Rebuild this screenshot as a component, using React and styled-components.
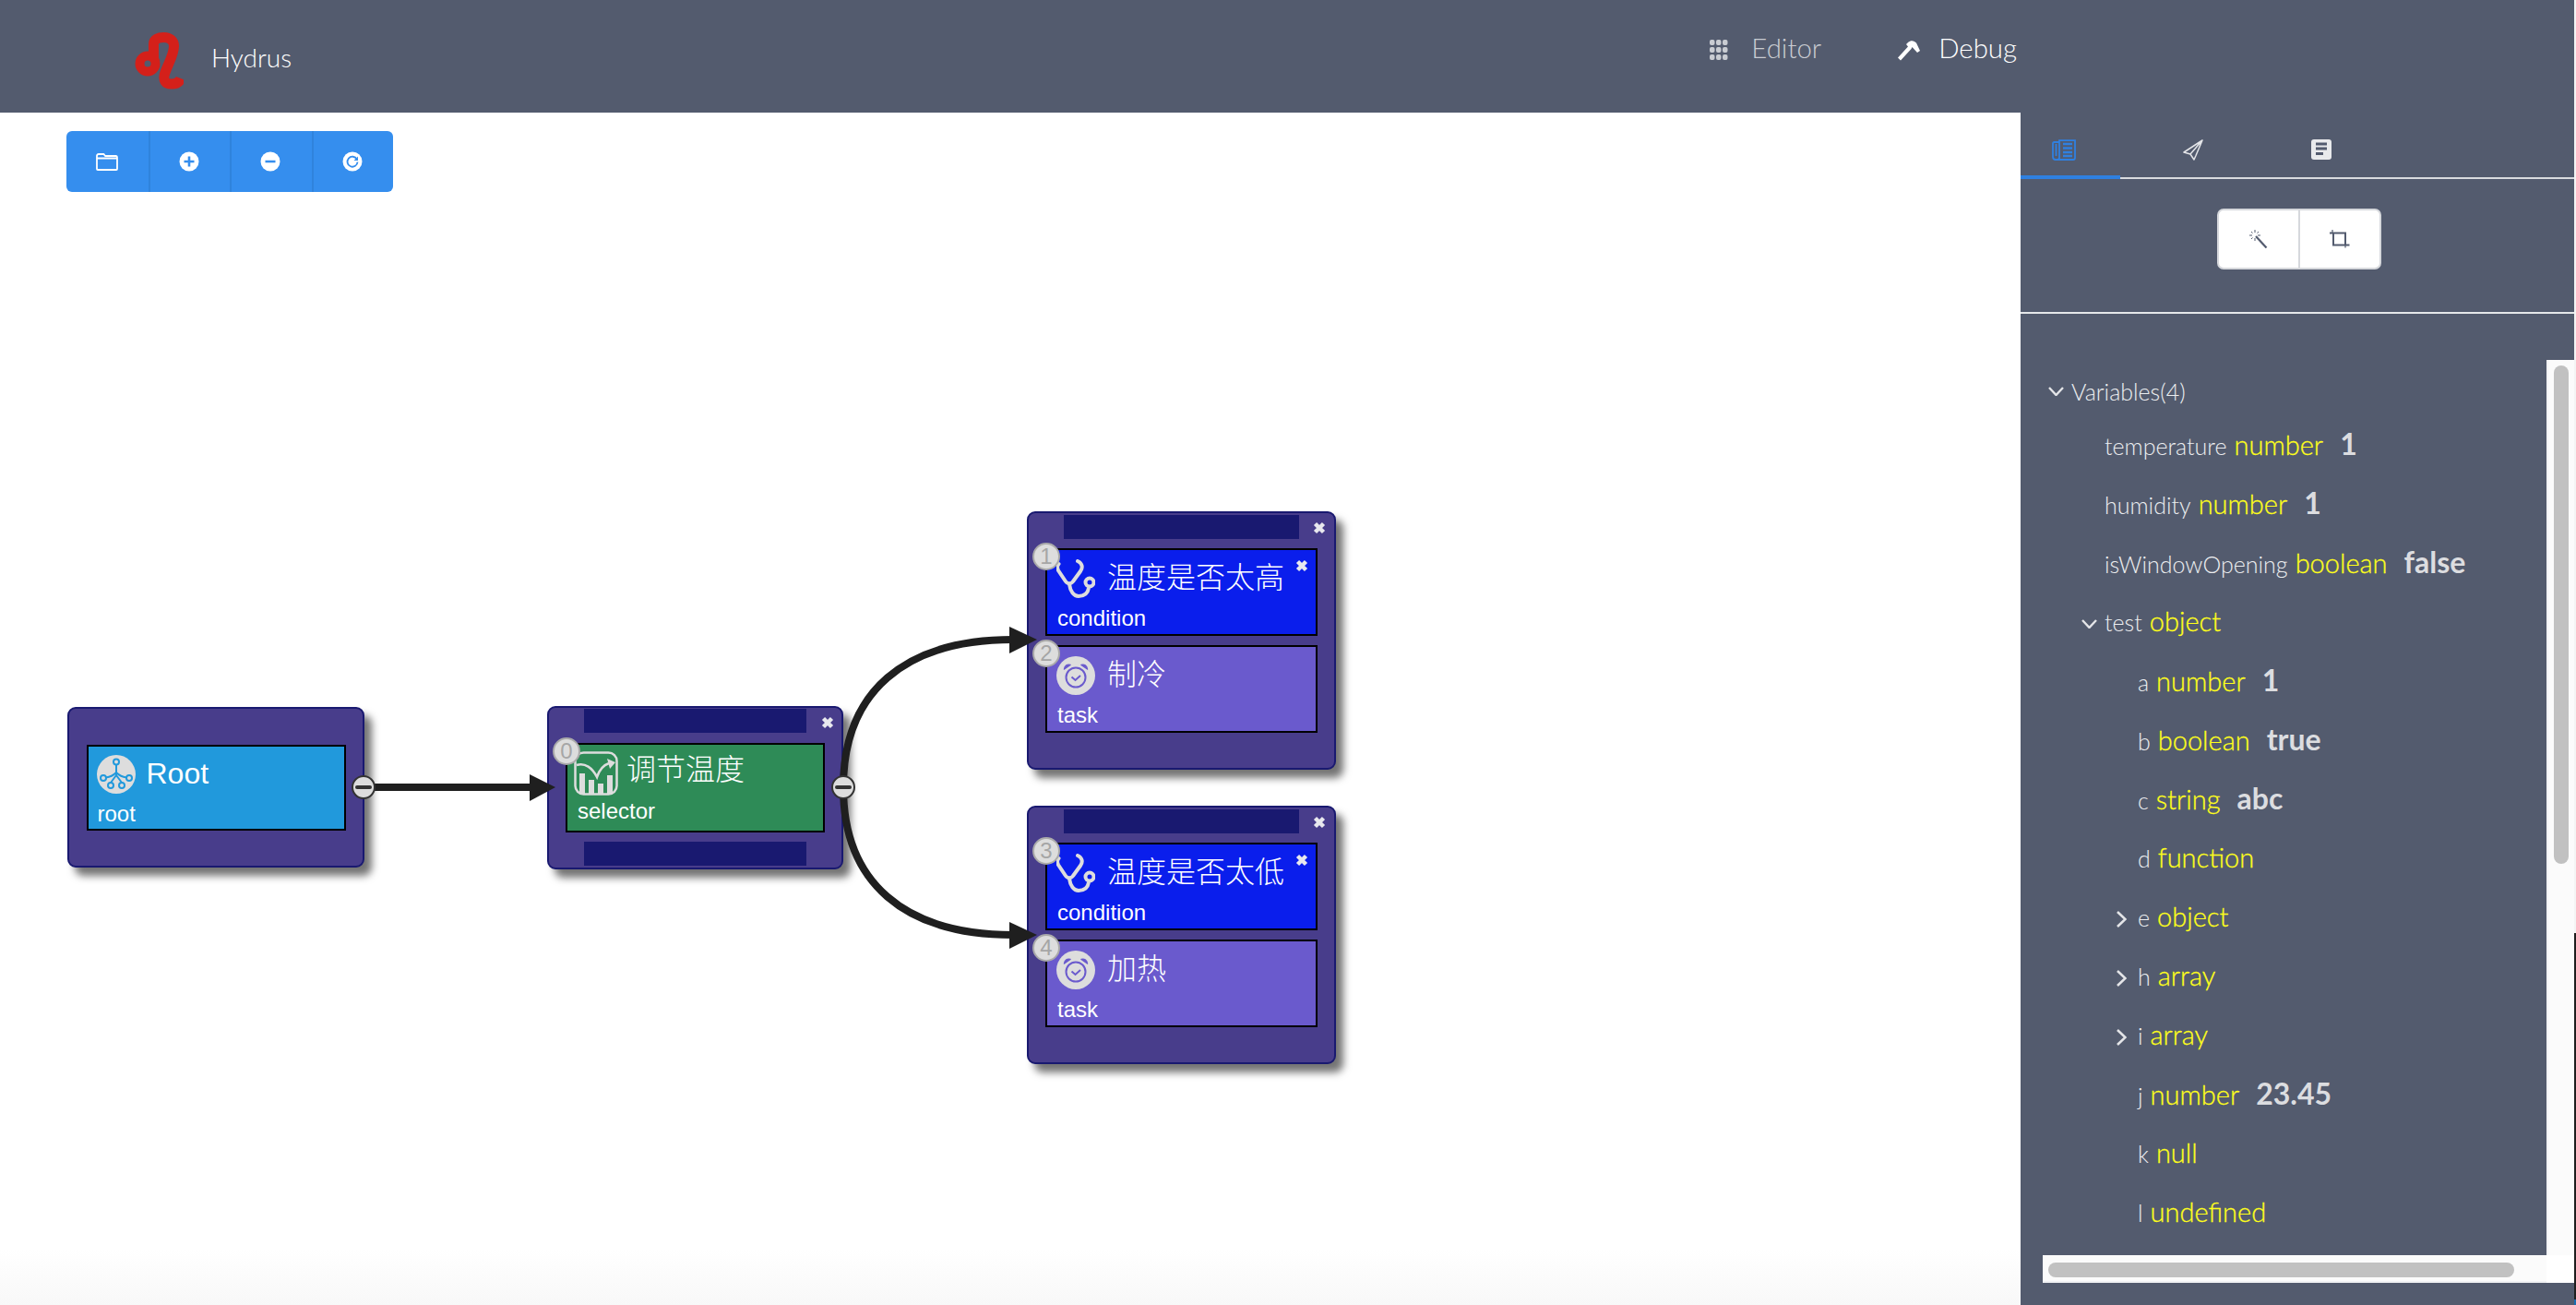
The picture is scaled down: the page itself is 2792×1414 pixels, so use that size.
import React from "react";
import styled, { createGlobalStyle } from "styled-components";

const Global = createGlobalStyle`
  html, body { margin: 0; padding: 0; background: #fff; }
  body { font-family: Lato, "Noto Sans", sans-serif; overflow: hidden; }
  #root { width: 2792px; height: 1414px; }
  * { box-sizing: border-box; }
`;

const Page = styled.div`
  width: 2792px; height: 1414px; display: flex; flex-direction: column; overflow: hidden;
  border-right: 2px solid #222;
  border-image: linear-gradient(#f4f4f4 1010px, #1e1e1e 1010px, #1e1e1e 1406px, #1a6cb0 1406px) 2;
`;
const Header = styled.header`
  height: 122px; flex: none; background: #535b6e; display: flex; align-items: flex-start; padding-right: 604px;
`;
const Brand = styled.div`
  display: flex; align-items: flex-start; padding: 33px 0 0 145px; gap: 30px;
`;
const BrandName = styled.span`
  font-size: 28px; font-weight: 300; color: #fff; line-height: 34px; margin-top: 12px;
`;
const Nav = styled.nav`
  margin-left: auto; display: flex; gap: 82px; padding-top: 34px;
`;
const NavItem = styled.div`
  display: flex; align-items: center; gap: ${p => p.$gap}px; font-size: 29.400px; font-weight: 300; line-height: 36px;
  color: ${p => (p.$active ? "#fff" : "#c9ccd2")};
  & > svg { margin-top: 4px; }
`;
const Body = styled.div`
  flex: 1; display: flex; min-height: 0;
`;
const Canvas = styled.main`
  flex: 1; position: relative; overflow: hidden;
  background: linear-gradient(#fff calc(100% - 60px), #f8f8f8 100%);
`;
const Toolbar = styled.div`
  position: absolute; left: 72px; top: 20px; width: 354px; height: 66px; border-radius: 6px; background: #358eee; display: flex; overflow: hidden;
`;
const ToolButton = styled.div`
  flex: 0 0 88.500px; display: flex; align-items: center; justify-content: center;
  & + & { border-left: 2px solid #2f83dc; padding-right: 2px; }
`;
const Edges = styled.svg`
  position: absolute; left: 0; top: -122px; width: 2190px; height: 1414px; pointer-events: none;
`;
const Frame = styled.section`
  position: absolute; left: ${p => p.$x}px; top: ${p => p.$y - 122}px; width: ${p => p.$w}px; height: ${p => p.$h}px;
  background: #483d8b; border: 2px solid #191970; border-radius: 9px;
  box-shadow: 8px 9px 8px rgba(0,0,0,.55);
  display: flex; flex-direction: column; align-items: center; justify-content: ${p => p.$justify};
  gap: ${p => p.$gap}px; padding: ${p => p.$pad};
`;
const Bar = styled.div`
  width: ${p => p.$w}px; height: 26px; flex: none; background: #191970;
`;
const Card = styled.div`
  position: relative; flex: none; width: ${p => p.$w}px; height: ${p => p.$h}px; background: ${p => p.$bg};
  border: 2px solid #000; padding: ${p => p.$top}px 0 0 ${p => p.$left}px; font-family: "Liberation Sans", "Noto Sans CJK SC", sans-serif; color: #fff;
`;
const CardHead = styled.div`
  display: flex; align-items: center; gap: ${p => p.$gap}px; height: ${p => p.$h}px;
`;
const CardTitle = styled.span`
  font-size: 32px; line-height: 40px; font-weight: ${p => (p.$cjk ? 300 : 400)}; white-space: nowrap; margin-top: ${p => p.$lift}px;
`;
const CardType = styled.div`
  font-size: 24px; line-height: 28px; margin-top: ${p => p.$mt}px; margin-left: ${p => p.$ml}px;
`;
const Badge = styled.div`
  position: absolute; left: -16px; top: -8px; width: 30px; height: 30px; border-radius: 50%; background: #ddd; border: 2px solid #aaa;
  color: #a6a6a6; font: 300 24px/26px "Liberation Sans", sans-serif; text-align: center;
`;
const Close = styled.svg`
  position: absolute; right: ${p => p.$r}px; top: ${p => p.$t}px; width: 14px; height: 14px;
`;
const Panel = styled.aside`
  width: 600px; flex: none; background: #535b6e; display: flex; flex-direction: column;
`;
const Tabs = styled.div`
  height: 72px; flex: none; display: flex; border-bottom: 2px solid #d9dbdf;
`;
const Tab = styled.div`
  width: ${p => p.$w}px; height: 72px; flex: none; display: flex; align-items: flex-start; justify-content: center; padding-top: 29px;
  padding-right: ${p => p.$shift || 0}px;
  border-bottom: ${p => (p.$active ? "4px solid #2f80e0" : "0")};
`;
const Tools = styled.div`
  height: 146px; flex: none; border-bottom: 2px solid #e6e8ea; display: flex; justify-content: center; padding: 32px 0 0 4px;
`;
const Segment = styled.div`
  width: 178px; height: 66px; background: #fff; border: 2px solid #d6d8dc; border-radius: 7px; display: flex;
`;
const SegmentButton = styled.div`
  flex: 1; display: flex; align-items: center; justify-content: center;
  & + & { border-left: 2px solid #d6d8dc; }
`;
const ScrollGrid = styled.div`
  margin-top: 50px; display: grid; grid-template-columns: 24px 546px 30px; grid-template-rows: 970px 30px;
`;
const Tree = styled.div`
  grid-column: 1 / 3; grid-row: 1; overflow: hidden; padding-top: 2px;
`;
const Row = styled.div`
  display: flex; align-items: baseline; height: ${p => p.$h || 64}px; padding-left: ${p => 19 + p.$level * 36}px; white-space: nowrap;
  line-height: 64px;
`;
const Slot = styled.span`
  width: 36px; flex: none; display: inline-flex; justify-content: flex-end; padding-right: ${p => p.$pr}px; align-self: center; margin-top: 6px;
`;
const Name = styled.span`
  font-size: 25px; font-weight: 300; color: #eceef0; margin-right: 8px;
`;
const TypeName = styled.span`
  font-size: 29px; font-weight: 300; color: #ffff1a; margin-right: 18px; -webkit-text-stroke: 0.300px #ffff1a;
`;
const Value = styled.span`
  font-size: 32px; font-weight: 700; color: #dcdde0;
`;
const VTrack = styled.div`
  grid-column: 3; grid-row: 1; background: #fbfbfb; padding: 6px 6px 0 6px; border-left: 2px solid #f1f2f4;
`;
const VThumb = styled.div`
  width: 16px; height: 540px; border-radius: 8px; background: #c1c1c1;
`;
const HTrack = styled.div`
  grid-column: 2; grid-row: 2; background: #fbfbfb; padding: 8px 0 0 6px; border-bottom: 2px solid #f1f2f4;
`;
const HThumb = styled.div`
  width: 505px; height: 16px; border-radius: 8px; background: #c1c1c1;
`;
const Corner = styled.div`
  grid-column: 3; grid-row: 2; background: #fff;
`;

const Logo = () => (
  <svg width="54" height="64" viewBox="145 33 54 64">
    <circle cx="160" cy="69" r="8.500" fill="none" stroke="#d4201a" strokeWidth="10" />
    <path d="M166.500 64V48C166.500 42 172 40.500 177.500 40.500C184 40.500 188.500 44 188.500 50C188.500 60 181 71 178.500 80C176.500 87 179 91 186 91C191 91 194.500 89 196 85" fill="none" stroke="#d4201a" strokeWidth="11" />
  </svg>
);
const GridIcon = () => (
  <svg width="20" height="22" viewBox="0 0 20 22" fill="#c9ccd2">
    {[0, 8, 16].flatMap(y => [0, 7, 14].map(x => <rect key={`${x}-${y}`} x={x} y={y} width="5.500" height="6" rx="2" />))}
  </svg>
);
const HammerIcon = () => (
  <svg width="25" height="24" viewBox="0 0 25 24" fill="#fff">
    <path d="M1 20.500L12 8.500L10 6L12 4C15 1 19 2 21 4.500L25 13L22 15L16.500 9L15.500 11L4 23.500Z" />
  </svg>
);
const FolderIcon = () => (
  <svg width="24" height="19" viewBox="0 0 24 19" fill="none" stroke="#fff" strokeWidth="1.800">
    <path d="M1 17V3C1 2 1.500 1 3 1H8.500L10 3H21.500C22.500 3 23 3.800 23 5V17C23 17.600 22.500 18 22 18H2C1.400 18 1 17.600 1 17Z" strokeLinejoin="round" />
    <path d="M1 5.500H23" />
  </svg>
);
const PlusCircle = () => (
  <svg width="22" height="22" viewBox="0 0 22 22">
    <circle cx="11" cy="11" r="10.500" fill="#fff" />
    <path d="M11 5.500V16.500M5.500 11H16.500" stroke="#358eee" strokeWidth="2.600" />
  </svg>
);
const MinusCircle = () => (
  <svg width="22" height="22" viewBox="0 0 22 22">
    <circle cx="11" cy="11" r="10.500" fill="#fff" />
    <path d="M5.500 11H16.500" stroke="#358eee" strokeWidth="2.600" />
  </svg>
);
const RefreshCircle = () => (
  <svg width="22" height="22" viewBox="0 0 22 22">
    <circle cx="11" cy="11" r="10.500" fill="#fff" />
    <path d="M15.800 8.500A5.500 5.500 0 1 0 16.500 11.500" fill="none" stroke="#358eee" strokeWidth="1.800" />
    <path d="M17 5.500V10H12.500Z" fill="#358eee" />
  </svg>
);
const NewsIcon = () => (
  <svg width="26" height="23" viewBox="0 0 26 23" fill="none" stroke="#2f80e0" strokeWidth="1.800">
    <path d="M8 3V1.200H25V20C25 21 24 22 23 22H4C2 22 1 21 1 19V4.500C1 3.600 1.500 3 2.500 3H8V20C8 21.500 7 22 5.500 22" />
    <path d="M4.500 5V18" />
    <path d="M12 5H22M12 9.500H22M12 14H22M12 18H22" strokeWidth="2.400" />
  </svg>
);
const PlaneIcon = () => (
  <svg width="22" height="23" viewBox="0 0 22 23" fill="none" stroke="#e4e5e8" strokeWidth="1.500" strokeLinejoin="round">
    <path d="M21 1L1 14L8 16L12 22L14 17.500ZM21 1L8 16M21 1L14 17.500" />
  </svg>
);
const DocIcon = () => (
  <svg width="22" height="22" viewBox="0 0 22 22">
    <rect width="22" height="22" rx="3" fill="#e9eaec" />
    <path d="M5 5H17M5 10H17M5 15.500H13" stroke="#535b6e" strokeWidth="2.800" />
  </svg>
);
const WandIcon = () => (
  <svg width="20" height="20" viewBox="0 0 20 20" fill="none" stroke="#535b6e">
    <path d="M7 7L18.500 19.500" strokeWidth="2.200" />
    <path d="M6 0V3M6 9V12M0 6H3M9 6H12M2 2L3.500 3.500M10 2L8.500 3.500M2 10L3.500 8.500" strokeWidth="1" />
  </svg>
);
const CropIcon = () => (
  <svg width="22" height="20" viewBox="0 0 22 20" fill="none" stroke="#535b6e">
    <path d="M3 0V3M17 19.500V17" strokeWidth="1.200" />
    <path d="M0 3.500H17V16" strokeWidth="2" />
    <path d="M4 3V16.500H21.500" strokeWidth="2" />
  </svg>
);
const RootIcon = () => (
  <svg width="42" height="42" viewBox="0 0 42 42" fill="none" stroke="#2199dc" strokeWidth="2">
    <circle cx="21" cy="21" r="21" fill="#ddd" stroke="none" />
    <circle cx="21" cy="7.500" r="3" />
    <circle cx="7" cy="25" r="3" />
    <circle cx="35" cy="25" r="3" />
    <circle cx="15" cy="33" r="3" />
    <circle cx="27" cy="33" r="3" />
    <path d="M21 10.500V22M21 22L15 30M21 22L27 30M21 19C17 23 14 24 10 24.500M21 19C25 23 28 24 32 24.500" />
  </svg>
);
const ChartIcon = () => (
  <svg width="48" height="48" viewBox="0 0 48 48" fill="none" stroke="#ddd">
    <rect x="1.500" y="1.500" width="45" height="45" rx="9" strokeWidth="2.500" />
    <path d="M3 15C12 12 20 18 25 28C28 19 32 15 38 13" strokeWidth="2.500" />
    <path d="M36 8L45 12L39 19Z" fill="#ddd" stroke="none" />
    <path d="M6 24H12V46H6ZM16 31H22V46H16ZM26 35H32V46H26ZM36 26H42V46H36Z" fill="#ddd" stroke="none" />
  </svg>
);
const StethIcon = () => (
  <svg width="42" height="42" viewBox="0 0 42 42" fill="none" stroke="#ddd" strokeWidth="4">
    <path d="M2.500 5C0.500 7 1 10 2 12L10 24C12 27 16 27 18 24L26 13C29 9 28 4 23 2" strokeLinecap="round" />
    <path d="M14 27C15 35 19 40 24 40C30 40 34 37 35 31" />
    <circle cx="36" cy="25" r="4.500" />
  </svg>
);
const ClockIcon = () => (
  <svg width="42" height="42" viewBox="0 0 42 42" fill="none">
    <circle cx="21" cy="21" r="21" fill="#ddd" />
    <circle cx="21" cy="23" r="10.500" stroke="#6a5acd" strokeWidth="2" />
    <path d="M16.500 22.500L20.500 26L26 21" stroke="#6a5acd" strokeWidth="2" />
    <path d="M8.500 14C9 10 12 8.500 15 9.500ZM33.500 14C33 10 30 8.500 27 9.500Z" fill="#6a5acd" stroke="#6a5acd" strokeWidth="1.500" strokeLinejoin="round" />
  </svg>
);
const CloseIcon = ({ r, t }) => (
  <Close $r={r} $t={t} viewBox="0 0 14 14">
    <path d="M2.500 2.500L11.500 11.500M11.500 2.500L2.500 11.500" stroke="#e8e8ee" strokeWidth="4.500" />
  </Close>
);
const ChevronDown = () => (
  <svg width="17" height="10" viewBox="0 0 17 10" fill="none" stroke="#e4e5e8" strokeWidth="2.400">
    <path d="M1 1L8.500 9L16 1" />
  </svg>
);
const ChevronRight = () => (
  <svg width="11" height="18" viewBox="0 0 11 18" fill="none" stroke="#e4e5e8" strokeWidth="2.600">
    <path d="M1 1L9.500 9L1 17" />
  </svg>
);

const Port = ({ x, y }) => (
  <g>
    <circle cx={x} cy={y} r="12" fill="#ddd" stroke="#333" strokeWidth="2" />
    <path d={`M${x - 7} ${y}H${x + 7}`} stroke="#333" strokeWidth="4" strokeLinecap="round" />
  </g>
);

const DiagramEdges = () => (
  <Edges viewBox="0 0 2190 1414">
    <g fill="none" stroke="#1f1f1f" strokeWidth="8">
      <path d="M400 853H578" />
      <path d="M914 853C914 750 980 693 1098 693" />
      <path d="M914 853C914 956 980 1013 1098 1013" />
    </g>
    <g fill="#1f1f1f">
      <path d="M574 839L602 853L574 868Z" />
      <path d="M1094 679L1124 693L1094 708Z" />
      <path d="M1094 999L1124 1013L1094 1028Z" />
    </g>
    <Port x={394} y={853} />
    <Port x={914} y={853} />
  </Edges>
);

const ConditionCard = ({ n, title }) => (
  <Card $w={295} $h={95} $bg="#0a1eec" $top={10} $left={10}>
    <Badge>{n}</Badge>
    <CloseIcon r={8} t={10} />
    <CardHead $gap={13} $h={42}>
      <StethIcon />
      <CardTitle $cjk $lift={-3}>{title}</CardTitle>
    </CardHead>
    <CardType $mt={8} $ml={1}>condition</CardType>
  </Card>
);
const TaskCard = ({ n, title }) => (
  <Card $w={295} $h={95} $bg="#6a5acd" $top={10} $left={10}>
    <Badge>{n}</Badge>
    <CardHead $gap={13} $h={42}>
      <ClockIcon />
      <CardTitle $cjk $lift={-3}>{title}</CardTitle>
    </CardHead>
    <CardType $mt={8} $ml={1}>task</CardType>
  </Card>
);
const Group = ({ y, a, b }) => (
  <Frame $x={1113} $y={y} $w={335} $h={280} $justify="flex-start" $gap={10} $pad="2px 0 0">
    <Bar $w={255} />
    <CloseIcon r={9} t={9} />
    {a}
    {b}
  </Frame>
);

const rows = [
  { level: 0, open: true, name: "Variables(4)", h: 57 },
  { level: 1, name: "temperature", type: "number", value: "1" },
  { level: 1, name: "humidity", type: "number", value: "1" },
  { level: 1, name: "isWindowOpening", type: "boolean", value: "false" },
  { level: 1, open: true, name: "test", type: "object" },
  { level: 2, name: "a", type: "number", value: "1" },
  { level: 2, name: "b", type: "boolean", value: "true" },
  { level: 2, name: "c", type: "string", value: "abc" },
  { level: 2, name: "d", type: "function" },
  { level: 2, closed: true, name: "e", type: "object" },
  { level: 2, closed: true, name: "h", type: "array" },
  { level: 2, closed: true, name: "i", type: "array" },
  { level: 2, name: "j", type: "number", value: "23.45" },
  { level: 2, name: "k", type: "null" },
  { level: 2, name: "l", type: "undefined" },
];

export default function App() {
  return (
    <Page>
      <Global />
      <Header>
        <Brand>
          <Logo />
          <BrandName>Hydrus</BrandName>
        </Brand>
        <Nav>
          <NavItem $gap={25}><GridIcon />Editor</NavItem>
          <NavItem $active $gap={20}><HammerIcon />Debug</NavItem>
        </Nav>
      </Header>
      <Body>
        <Canvas>
          <Toolbar>
            <ToolButton><FolderIcon /></ToolButton>
            <ToolButton><PlusCircle /></ToolButton>
            <ToolButton><MinusCircle /></ToolButton>
            <ToolButton><RefreshCircle /></ToolButton>
          </Toolbar>
          <Frame $x={73} $y={766} $w={322} $h={174} $justify="center" $gap={0} $pad="0">
            <Card $w={281} $h={93} $bg="#2199dc" $top={9} $left={9}>
              <CardHead $gap={12} $h={42}>
                <RootIcon />
                <CardTitle $lift={-2}>Root</CardTitle>
              </CardHead>
              <CardType $mt={8} $ml={1}>root</CardType>
            </Card>
          </Frame>
          <Frame $x={593} $y={765} $w={321} $h={177} $justify="space-between" $gap={0} $pad="1px 0 2px">
            <Bar $w={241} />
            <CloseIcon r={8} t={9} />
            <Card $w={281} $h={97} $bg="#2e8b57" $top={7} $left={7}>
              <Badge>0</Badge>
              <CardHead $gap={9} $h={48}>
                <ChartIcon />
                <CardTitle $cjk $lift={-8}>调节温度</CardTitle>
              </CardHead>
              <CardType $mt={3} $ml={4}>selector</CardType>
            </Card>
            <Bar $w={241} />
          </Frame>
          <Group y={554} a={<ConditionCard n="1" title="温度是否太高" />} b={<TaskCard n="2" title="制冷" />} />
          <Group y={873} a={<ConditionCard n="3" title="温度是否太低" />} b={<TaskCard n="4" title="加热" />} />
          <DiagramEdges />
        </Canvas>
        <Panel>
          <Tabs>
            <Tab $active $w={108} $shift={14}><NewsIcon /></Tab>
            <Tab $w={158}><PlaneIcon /></Tab>
            <Tab $w={120}><DocIcon /></Tab>
          </Tabs>
          <Tools>
            <Segment>
              <SegmentButton><WandIcon /></SegmentButton>
              <SegmentButton><CropIcon /></SegmentButton>
            </Segment>
          </Tools>
          <ScrollGrid>
            <Tree>
              {rows.map(r => (
                <Row key={r.name} $level={r.level} $h={r.h}>
                  <Slot $pr={r.closed ? 12 : 8}>
                    {r.open && <ChevronDown />}
                    {r.closed && <ChevronRight />}
                  </Slot>
                  <Name>{r.name}</Name>
                  {r.type && <TypeName>{r.type}</TypeName>}
                  {r.value && <Value>{r.value}</Value>}
                </Row>
              ))}
            </Tree>
            <VTrack><VThumb /></VTrack>
            <HTrack><HThumb /></HTrack>
            <Corner />
          </ScrollGrid>
        </Panel>
      </Body>
    </Page>
  );
}
